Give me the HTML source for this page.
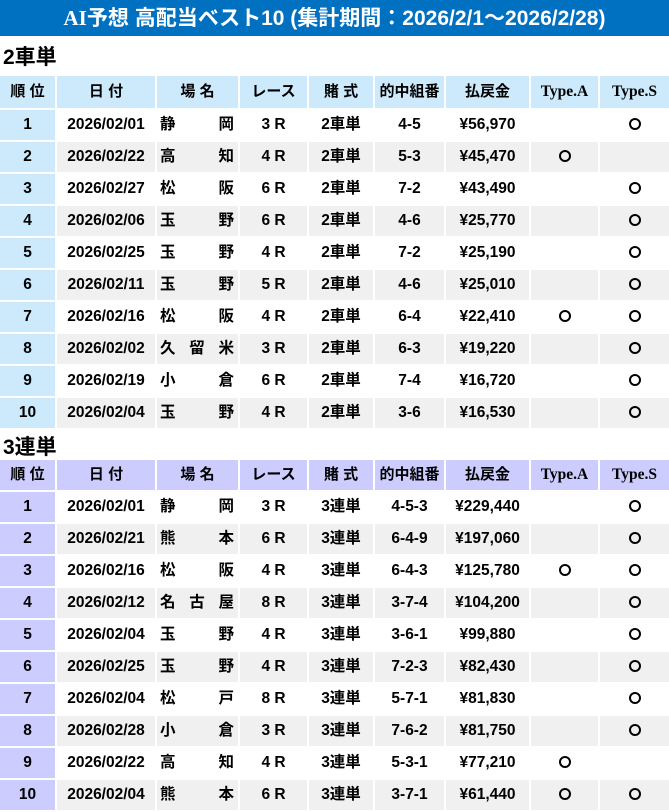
<!DOCTYPE html>
<html><head><meta charset="utf-8"><style>
body{margin:0;width:669px;height:809px;overflow:hidden;background:#fff;font-family:"Liberation Sans","Noto Sans CJK JP",sans-serif;font-weight:bold;color:#000}
.title{height:36px;background:#0070c0;color:#fff;font-size:21px;line-height:36px;text-align:center}
.title .ai{font-family:"Liberation Serif","Noto Sans CJK JP",serif}
h2{margin:0;height:39px;line-height:44px;font-size:21px;padding-left:3px;font-weight:bold}
table{border-collapse:separate;border-spacing:2px;margin-left:-2px;margin-top:-1px;table-layout:fixed;width:673px}
td,th{height:30px;padding:0;font-size:15.5px;text-align:center;line-height:30px}
.t1 th{height:32px}
th{font-size:15px}
.t1 th,.t1 td.n{background:#cceafb}
.t2 th,.t2 td.n{background:#ccccff}
tr:nth-child(odd) td{background:#f0f0f0}
tr:nth-child(even) td{background:#fff}
.t1 td.n{background:#cceafb!important}
.t2 td.n{background:#ccccff!important}
.v{text-align:justify;text-align-last:justify;padding:0 4px 0 3px}
.s{font-family:"Liberation Serif",serif;font-size:15.5px}
i{display:inline-block;width:8px;height:8px;border:2.5px solid #000;border-radius:50%;vertical-align:middle;margin-top:-2px}
</style></head><body>
<div class="title"><span class="ai">AI</span>予想 高配当ベスト10 (集計期間：2026/2/1～2026/2/28)</div>
<h2>2車単</h2>
<table class="t1">
<colgroup><col style="width:55px"><col style="width:98px"><col style="width:81px"><col style="width:67px"><col style="width:64px"><col style="width:69px"><col style="width:83px"><col style="width:67px"><col style="width:69px"></colgroup>
<tr><th>順 位</th><th>日 付</th><th>場 名</th><th>レース</th><th>賭 式</th><th>的中組番</th><th>払戻金</th><th class="s">Type.A</th><th class="s">Type.S</th></tr>
<tr><td class="n">1</td><td>2026/02/01</td><td class="v">静 岡</td><td>3 R</td><td>2車単</td><td>4-5</td><td>¥56,970</td><td></td><td><i></i></td></tr>
<tr><td class="n">2</td><td>2026/02/22</td><td class="v">高 知</td><td>4 R</td><td>2車単</td><td>5-3</td><td>¥45,470</td><td><i></i></td><td></td></tr>
<tr><td class="n">3</td><td>2026/02/27</td><td class="v">松 阪</td><td>6 R</td><td>2車単</td><td>7-2</td><td>¥43,490</td><td></td><td><i></i></td></tr>
<tr><td class="n">4</td><td>2026/02/06</td><td class="v">玉 野</td><td>6 R</td><td>2車単</td><td>4-6</td><td>¥25,770</td><td></td><td><i></i></td></tr>
<tr><td class="n">5</td><td>2026/02/25</td><td class="v">玉 野</td><td>4 R</td><td>2車単</td><td>7-2</td><td>¥25,190</td><td></td><td><i></i></td></tr>
<tr><td class="n">6</td><td>2026/02/11</td><td class="v">玉 野</td><td>5 R</td><td>2車単</td><td>4-6</td><td>¥25,010</td><td></td><td><i></i></td></tr>
<tr><td class="n">7</td><td>2026/02/16</td><td class="v">松 阪</td><td>4 R</td><td>2車単</td><td>6-4</td><td>¥22,410</td><td><i></i></td><td><i></i></td></tr>
<tr><td class="n">8</td><td>2026/02/02</td><td class="v">久 留 米</td><td>3 R</td><td>2車単</td><td>6-3</td><td>¥19,220</td><td></td><td><i></i></td></tr>
<tr><td class="n">9</td><td>2026/02/19</td><td class="v">小 倉</td><td>6 R</td><td>2車単</td><td>7-4</td><td>¥16,720</td><td></td><td><i></i></td></tr>
<tr><td class="n">10</td><td>2026/02/04</td><td class="v">玉 野</td><td>4 R</td><td>2車単</td><td>3-6</td><td>¥16,530</td><td></td><td><i></i></td></tr>
</table>
<h2 style="height:29px;line-height:35px">3連単</h2>
<table class="t2">
<colgroup><col style="width:55px"><col style="width:98px"><col style="width:81px"><col style="width:67px"><col style="width:64px"><col style="width:69px"><col style="width:83px"><col style="width:67px"><col style="width:69px"></colgroup>
<tr><th>順 位</th><th>日 付</th><th>場 名</th><th>レース</th><th>賭 式</th><th>的中組番</th><th>払戻金</th><th class="s">Type.A</th><th class="s">Type.S</th></tr>
<tr><td class="n">1</td><td>2026/02/01</td><td class="v">静 岡</td><td>3 R</td><td>3連単</td><td>4-5-3</td><td>¥229,440</td><td></td><td><i></i></td></tr>
<tr><td class="n">2</td><td>2026/02/21</td><td class="v">熊 本</td><td>6 R</td><td>3連単</td><td>6-4-9</td><td>¥197,060</td><td></td><td><i></i></td></tr>
<tr><td class="n">3</td><td>2026/02/16</td><td class="v">松 阪</td><td>4 R</td><td>3連単</td><td>6-4-3</td><td>¥125,780</td><td><i></i></td><td><i></i></td></tr>
<tr><td class="n">4</td><td>2026/02/12</td><td class="v">名 古 屋</td><td>8 R</td><td>3連単</td><td>3-7-4</td><td>¥104,200</td><td></td><td><i></i></td></tr>
<tr><td class="n">5</td><td>2026/02/04</td><td class="v">玉 野</td><td>4 R</td><td>3連単</td><td>3-6-1</td><td>¥99,880</td><td></td><td><i></i></td></tr>
<tr><td class="n">6</td><td>2026/02/25</td><td class="v">玉 野</td><td>4 R</td><td>3連単</td><td>7-2-3</td><td>¥82,430</td><td></td><td><i></i></td></tr>
<tr><td class="n">7</td><td>2026/02/04</td><td class="v">松 戸</td><td>8 R</td><td>3連単</td><td>5-7-1</td><td>¥81,830</td><td></td><td><i></i></td></tr>
<tr><td class="n">8</td><td>2026/02/28</td><td class="v">小 倉</td><td>3 R</td><td>3連単</td><td>7-6-2</td><td>¥81,750</td><td></td><td><i></i></td></tr>
<tr><td class="n">9</td><td>2026/02/22</td><td class="v">高 知</td><td>4 R</td><td>3連単</td><td>5-3-1</td><td>¥77,210</td><td><i></i></td><td></td></tr>
<tr><td class="n">10</td><td>2026/02/04</td><td class="v">熊 本</td><td>6 R</td><td>3連単</td><td>3-7-1</td><td>¥61,440</td><td><i></i></td><td><i></i></td></tr>
</table>
</body></html>
